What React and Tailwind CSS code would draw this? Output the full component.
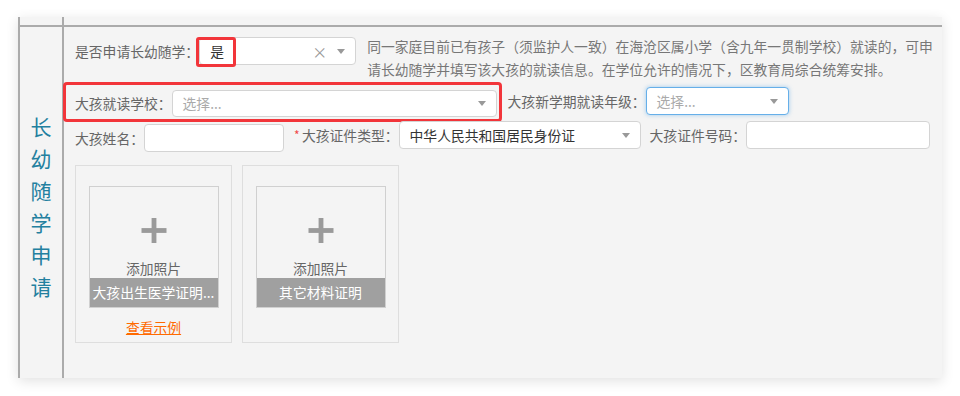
import React from 'react';

const font = { fontFamily: '"Noto Sans CJK SC", "Noto Sans", sans-serif' };

function Caret() {
  return <span className="inline-block w-0 h-0 border-l-[4.5px] border-r-[4.5px] border-t-[5px] border-l-transparent border-r-transparent border-t-[#999]" />;
}

function Select({ width, height = 'h-[28px]', value, placeholder, clear, focus, children }) {
  return (
    <div
      className={`relative flex items-center bg-white rounded-[4px] pl-[10px] pr-[10px] ${width} ${height} ${
        focus ? 'border border-[#66afe9] shadow-[0_0_4px_rgba(102,175,233,0.6)]' : 'border border-[#d4d4d4]'
      }`}
    >
      {value ? (
        <span className="flex-1 text-[#333]">{value}</span>
      ) : (
        <span className="flex-1 text-[#aaa]">{placeholder}</span>
      )}
      {clear && <span className="text-[#999] text-[15px] mr-[10px] leading-none">×</span>}
      <Caret />
      {children}
    </div>
  );
}

function Input({ width }) {
  return <div className={`bg-white border border-[#d4d4d4] rounded-[4px] h-[28px] ${width}`} />;
}

function UploadCard({ title, example }) {
  return (
    <div className="w-[157px] h-[178px] border border-[#dedede] flex flex-col items-center pt-[20px]">
      <div className="w-[130px] border border-[#d0d0d0] flex flex-col">
        <div className="h-[91px] flex flex-col items-center">
          <svg width="26" height="26" viewBox="0 0 26 26" className="mt-[31px]">
            <rect x="10.5" y="0" width="5" height="26" fill="#9a9a9a" />
            <rect x="0" y="10.5" width="26" height="5" fill="#9a9a9a" />
          </svg>
          <div className="mt-[15px] leading-[20px] text-[#666]">添加照片</div>
        </div>
        <div className="h-[29px] bg-[#a0a0a0] text-white flex items-center justify-center whitespace-nowrap overflow-hidden">
          {title}
        </div>
      </div>
      {example && (
        <a className="mt-[9px] leading-[20px] text-[#ff6a00] underline">查看示例</a>
      )}
    </div>
  );
}

export default function App() {
  return (
    <div className="w-[960px] h-[396px] bg-white pt-[17px] pl-[18px] text-[13.8px]" style={font}>
      <div className="w-[924px] h-[361px] bg-[#f4f4f4] shadow-[0_3px_12px_rgba(0,0,0,0.12)] flex">
        {/* left title cell */}
        <div className="w-[46px] border-l-2 border-r-2 border-[#ababab] flex flex-col">
          <div className="h-[8px]" />
          <div className="flex-1 border-t-2 border-[#ababab] flex items-center justify-center">
            <div className="text-[21px] leading-[32px] text-[#23809f] flex flex-col items-center pt-[6px]">
              <span>长</span>
              <span>幼</span>
              <span>随</span>
              <span>学</span>
              <span>申</span>
              <span>请</span>
            </div>
          </div>
        </div>

        {/* right content */}
        <div className="flex-1 flex flex-col">
          <div className="h-[8px]" />
          <div className="flex-1 border-t-2 border-[#ababab] pl-[11px] text-[#666]">
            {/* row 1 */}
            <div className="flex items-start">
              <div className="flex items-center mt-[10px] h-[28px]">
                <span>是否申请长幼随学：</span>
                <Select width="w-[157px]" value="是" clear>
                  <div className="absolute -left-[4px] -top-[1px] w-[40px] h-[30px] border-[3px] border-[#f2353a] rounded-[3px]" />
                </Select>
              </div>
              <div className="ml-[11px] mt-[8px] w-[570px] leading-[23px] text-[#777]">
                同一家庭目前已有孩子（须监护人一致）在海沧区属小学（含九年一贯制学校）就读的，可申请长幼随学并填写该大孩的就读信息。在学位允许的情况下，区教育局综合统筹安排。
              </div>
            </div>

            {/* row 2 */}
            <div className="flex items-start mt-[6px]">
              <div className="relative flex items-center mt-[3px] h-[27px]">
                <span>大孩就读学校：</span>
                <Select width="w-[325px]" height="h-[27px]" placeholder="选择..." />
                <div className="absolute -left-[12px] -top-[8px] -right-[5px] -bottom-[5px] border-[3px] border-[#f2353a] rounded-[4px]" />
              </div>
              <div className="flex items-center ml-[11px] h-[28px]">
                <span>大孩新学期就读年级：</span>
                <Select width="w-[143px]" placeholder="选择..." focus />
              </div>
            </div>

            {/* row 3 */}
            <div className="flex items-start mt-[4px]">
              <div className="flex items-center mt-[3px] h-[28px]">
                <span>大孩姓名：</span>
                <Input width="w-[140px]" />
              </div>
              <div className="flex items-center ml-[10px] h-[28px]">
                <span className="text-[#f04848] w-[8px] text-[12px]">*</span>
                <span>大孩证件类型：</span>
                <Select width="w-[242px]" value="中华人民共和国居民身份证" />
              </div>
              <div className="flex items-center ml-[9px] h-[28px]">
                <span>大孩证件号码：</span>
                <Input width="w-[184px]" />
              </div>
            </div>

            {/* uploads */}
            <div className="flex gap-[10px] mt-[13px]">
              <UploadCard title="大孩出生医学证明..." example />
              <UploadCard title="其它材料证明" />
            </div>
          </div>
        </div>
      </div>
    </div>
  );
}
